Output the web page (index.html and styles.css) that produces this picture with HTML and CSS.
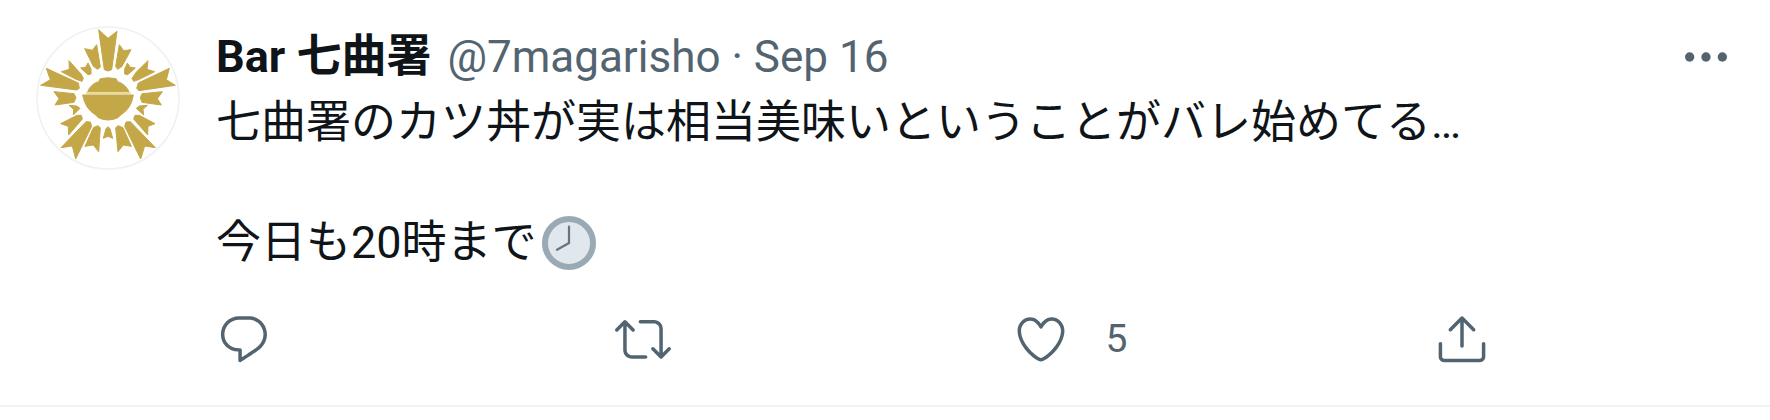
FILE: index.html
```html
<!DOCTYPE html>
<html lang="ja">
<head>
    <meta charset="UTF-8">
    <meta name="viewport" content="width=device-width, initial-scale=1.0">
    <title>Bar 七曲署</title>
    <link rel="stylesheet" href="styles.css">
</head>
<body>

    <article class="tweet">
        <a class="avatar" href="#" aria-label="Bar 七曲署">
            <svg viewBox="48 47 432 432">
                <circle class="avatar-ring" cx="264" cy="263" r="213"/>
                <!-- Rays -->
                <path d="M236 58L264 84L291 63L275 178L264 182L253 178Z"/>
                <path d="M194 115L217 120L230 103L241 170L233 177L220 168Z"/>
                <path d="M333 118L311 121L298 103L287 168L293 177L306 168Z"/>
                <path d="M182 173L197 171L204 158L213 176L213 191L204 193Z"/>
                <path d="M346 173L331 171L322 158L314 176L314 191L323 193Z"/>
                <path d="M124 184L148 177L147 151L183 191L190 204L186 213L168 207Z"/>
                <path d="M404 184L381 177L384 151L349 185L336 204L341 213L358 207Z"/>
                <path d="M79 174L175 218L178 234L170 239L62 225L91 208Z"/>
                <path d="M448 174L355 218L350 234L357 241L466 225L439 208Z"/>
                <path d="M102 244L162 250L168 262L162 276L105 284L117 265Z"/>
                <path d="M427 244L366 250L361 262L366 276L424 284L412 265Z"/>
                <path d="M147 285L170 287L180 294L160 314L161 297Z"/>
                <path d="M382 285L358 287L349 294L371 314L369 297Z"/>
                <path d="M122 340L171 315L184 315L187 326L146 374L145 348Z"/>
                <path d="M405 340L358 315L345 315L341 326L383 374L384 348Z"/>
                <path d="M123 412L198 334L211 335L215 348L167 446L157 407Z"/>
                <path d="M406 412L331 334L318 335L314 348L362 446L374 407Z"/>
                <path d="M195 408L220 352L233 346L241 352L236 424L220 404Z"/>
                <path d="M334 408L309 352L295 346L287 352L294 424L310 404Z"/>
                <path d="M250 384L258 355L264 349L270 355L278 384L264 378Z"/>
                <!-- Bowl -->
                <path d="M203 244Q212 221 236 214L241 205Q264 200 288 205L293 214Q316 221 327 244Z"/>
                <path d="M188 254H340Q334 295 302 314L294 322Q264 336 235 322L227 314Q195 295 188 254Z"/>
                <path class="bowl-line" d="M198 249H332"/>
            </svg>
        </a>

        <div class="content">
            <header class="header">
                <a class="name" href="#">Bar 七曲署</a>
                <span class="meta"><a href="#">@7magarisho</a> · <a href="#">Sep 16</a></span>
                <button class="more" type="button" aria-label="More">
                    <svg class="icon" viewBox="0 0 24 24"><circle cx="5" cy="12" r="2"/><circle cx="12" cy="12" r="2"/><circle cx="19" cy="12" r="2"/></svg>
                </button>
            </header>

            <div class="text">
                <p>七曲署のカツ丼が実は相当美味いということがバレ始めてる…</p>
                <p>今日も20時まで<svg class="emoji" viewBox="0 0 36 36" role="img" aria-label="8時"><circle class="clock-face" cx="18" cy="18" r="16"/><path class="clock-hands" d="M18 7V18L10 22.500"/></svg></p>
            </div>

            <div class="actions">
                <button type="button" aria-label="Reply">
                    <svg class="icon" viewBox="0 0 24 24"><path d="M14.046 2.242l-4.148-.01h-.002c-4.374 0-7.8 3.427-7.8 7.802 0 4.098 3.186 7.206 7.465 7.37v3.828c0 .108.044.286.12.403.142.225.384.347.632.347.138 0 .277-.038.402-.118.264-.168 6.473-4.14 8.088-5.506 1.902-1.61 3.04-3.97 3.043-6.312v-.017c-.006-4.367-3.43-7.787-7.8-7.788zm3.787 12.972c-1.134.96-4.862 3.405-6.772 4.643V16.67c0-.414-.335-.75-.75-.75h-.396c-3.66 0-6.318-2.476-6.318-5.886 0-3.534 2.768-6.302 6.3-6.302l4.147.01h.002c3.532 0 6.3 2.766 6.302 6.296-.003 1.91-.942 3.844-2.514 5.176z"/></svg>
                    <span class="count"></span>
                </button>
                <button type="button" aria-label="Retweet">
                    <svg class="icon" viewBox="0 0 24 24"><path d="M23.77 15.67c-.292-.293-.767-.293-1.06 0l-2.22 2.22V7.65c0-2.068-1.683-3.75-3.75-3.75h-5.85c-.414 0-.75.336-.75.75s.336.75.75.75h5.85c1.24 0 2.25 1.01 2.25 2.25v10.24l-2.22-2.22c-.293-.293-.768-.293-1.06 0s-.294.768 0 1.06l3.5 3.5c.145.147.337.22.53.22s.383-.072.53-.22l3.5-3.5c.294-.292.294-.767 0-1.06zm-10.66 3.28H7.26c-1.24 0-2.25-1.01-2.25-2.25V6.46l2.22 2.22c.148.147.34.22.532.22s.384-.073.53-.22c.293-.293.293-.768 0-1.06l-3.5-3.5c-.293-.294-.768-.294-1.06 0l-3.5 3.5c-.294.292-.294.767 0 1.06s.767.293 1.06 0l2.22-2.22V16.7c0 2.068 1.683 3.75 3.75 3.75h5.85c.414 0 .75-.336.75-.75s-.337-.75-.75-.75z"/></svg>
                    <span class="count"></span>
                </button>
                <button type="button" aria-label="Like">
                    <svg class="icon" viewBox="0 0 24 24"><path d="M12 21.638h-.014C9.403 21.59 1.95 14.856 1.95 8.478c0-3.064 2.525-5.754 5.403-5.754 2.29 0 3.83 1.58 4.646 2.73.814-1.148 2.354-2.73 4.645-2.73 2.88 0 5.404 2.69 5.404 5.755 0 6.376-7.454 13.11-10.037 13.157H12zM7.354 4.225c-2.08 0-3.903 1.988-3.903 4.255 0 5.74 7.034 11.596 8.55 11.658 1.518-.062 8.55-5.917 8.55-11.658 0-2.267-1.823-4.255-3.903-4.255-2.528 0-3.94 2.936-3.952 2.965-.23.562-1.156.562-1.387 0-.014-.03-1.425-2.965-3.954-2.965z"/></svg>
                    <span class="count">5</span>
                </button>
                <button type="button" aria-label="Share">
                    <svg class="icon" viewBox="0 0 24 24"><path d="M17.53 7.47l-5-5c-.293-.293-.768-.293-1.06 0l-5 5c-.294.293-.294.768 0 1.06s.767.294 1.06 0l3.72-3.72V15c0 .414.336.75.75.75s.75-.336.75-.75V4.81l3.72 3.72c.146.147.338.22.53.22s.384-.072.53-.22c.293-.293.293-.767 0-1.06z"/><path d="M19.708 21.944H4.292C3.028 21.944 2 20.916 2 19.652V14c0-.414.336-.75.75-.75s.75.336.75.75v5.652c0 .437.355.792.792.792h15.416c.437 0 .792-.355.792-.792V14c0-.414.336-.75.75-.75s.75.336.75.75v5.652c0 1.264-1.028 2.292-2.292 2.292z"/></svg>
                </button>
            </div>
        </div>
    </article>

</body>
</html>
```
FILE: styles.css
```css
body {
    margin: 0;
    background-color: #fff;
    color: #0f1419;
    font-family: Roboto, "Noto Sans CJK JP", sans-serif;
    font-size: 45px;
    line-height: 60px;
}
a {
    color: inherit;
    text-decoration: none;
}
button {
    display: flex;
    align-items: center;
    padding: 0;
    border: 0;
    background: none;
    color: #536471;
    font: inherit;
    cursor: pointer;
}
.tweet {
    display: flex;
    gap: 36px;
    padding: 26px 36px 36px;
    border-bottom: 2px solid #eff3f4;
}
.avatar {
    flex: none;
    width: 144px;
    height: 144px;
}
.avatar svg {
    display: block;
    fill: #c4a747;
    stroke: #c4a747;
    stroke-width: 3;
}
.avatar .avatar-ring {
    fill: #fff;
    stroke: #f0f1f2;
    stroke-width: 5;
}
.bowl-line {
    stroke: #e6d795;
    stroke-width: 6;
}
.content {
    flex: 1;
    min-width: 0;
    padding-top: 1px;
}
.header {
    display: flex;
    align-items: center;
    gap: 16px;
    height: 60px;
}
.name {
    font-weight: 700;
}
.meta {
    color: #536471;
    font-size: 44px;
}
.more {
    margin-left: auto;
}
.icon {
    display: block;
    flex: none;
    width: 56px;
    height: 56px;
    fill: currentColor;
}
.text {
    margin-top: 6px;
}
.text p {
    margin: 0;
}
.text p + p {
    margin-top: 60px;
}
.emoji {
    width: 54px;
    height: 54px;
    margin-left: 5px;
    vertical-align: -12px;
}
.clock-face {
    fill: #e1e8ed;
    stroke: #9aaab4;
    stroke-width: 4;
}
.clock-hands {
    fill: none;
    stroke: #66757f;
    stroke-width: 1.5;
    stroke-linecap: round;
}
.actions {
    display: flex;
    justify-content: space-between;
    max-width: 1274px;
    margin-top: 36px;
}
.count {
    padding: 0 36px;
    font-size: 39px;
}
```
